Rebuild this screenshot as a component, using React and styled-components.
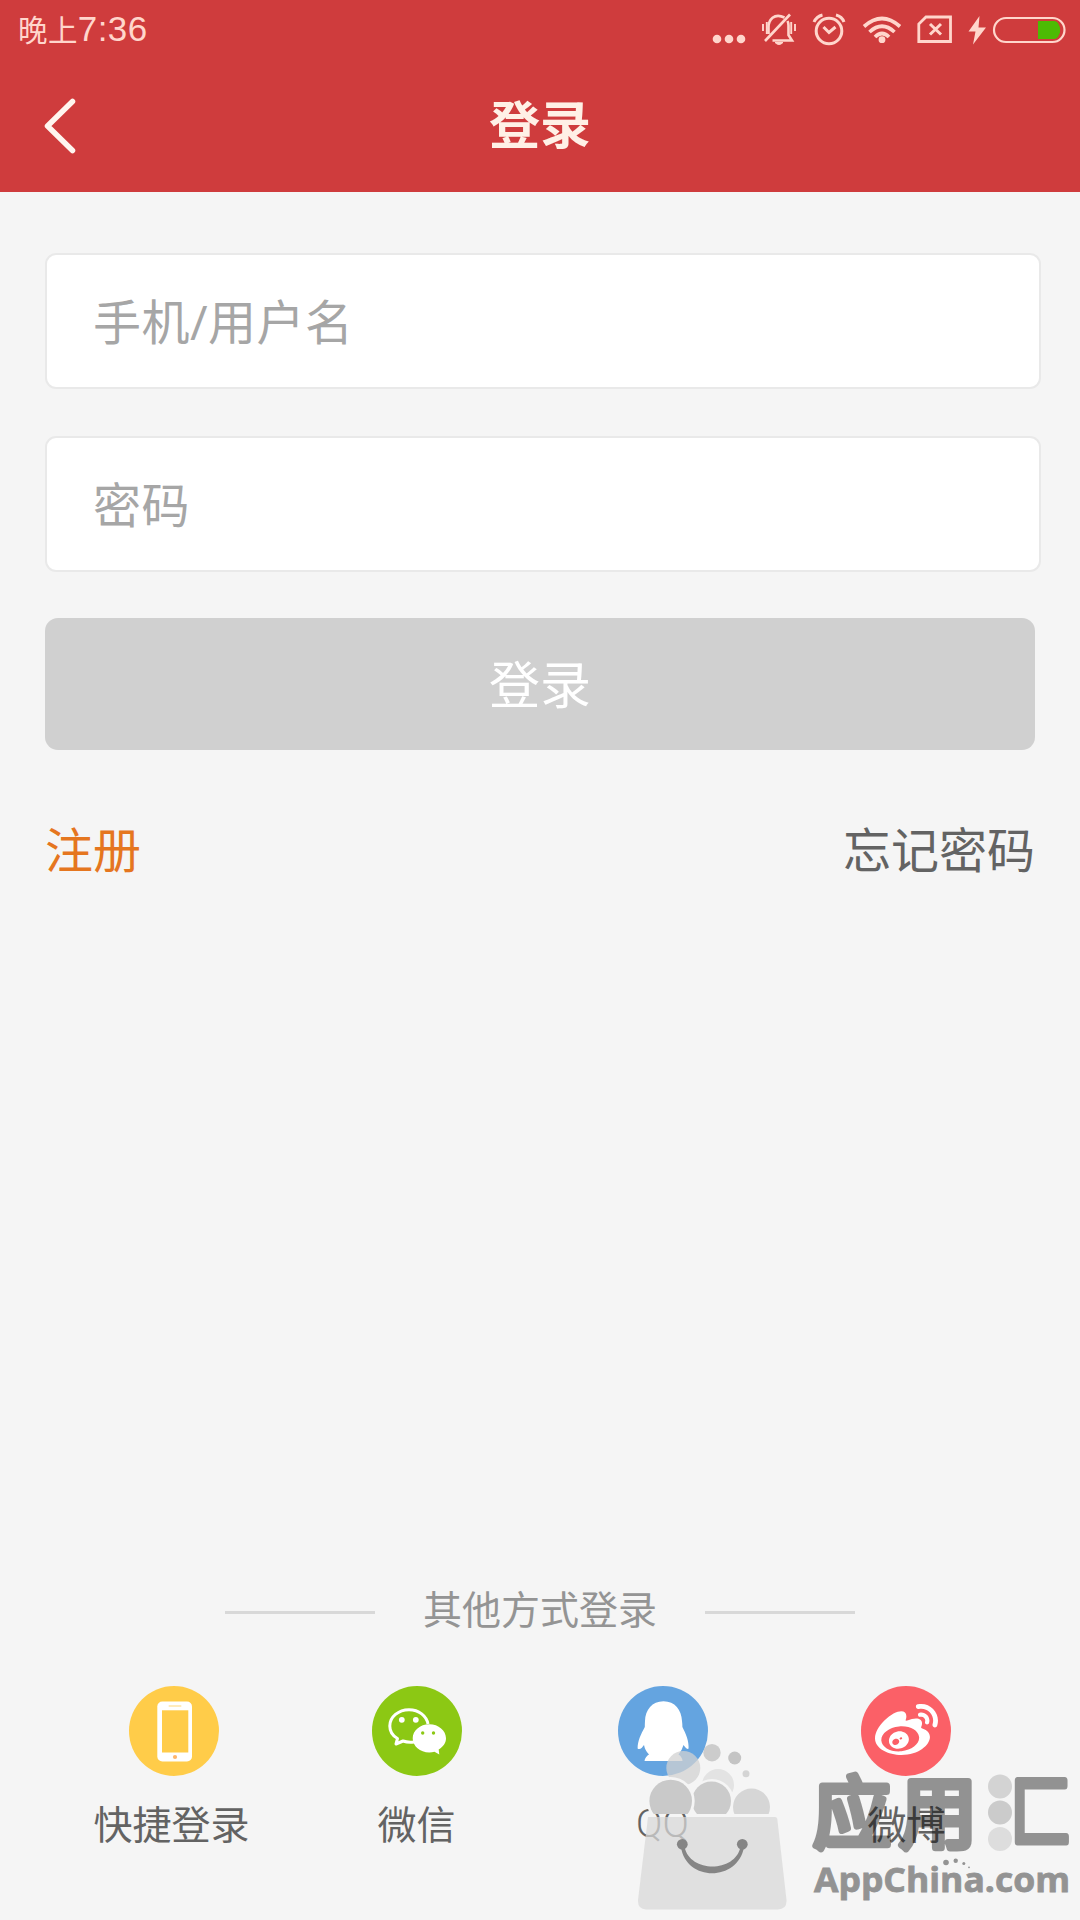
import React from "react";
import styled, { createGlobalStyle } from "styled-components";
import { FaWeibo } from "react-icons/fa";

const GlobalStyle = createGlobalStyle`
  * {
    box-sizing: border-box;
  }

  body {
    margin: 0;
    background-color: #f5f5f5;
    font-family: Roboto, "Noto Sans CJK SC", sans-serif;
  }
`;

const Page = styled.div`
  position: relative;
  display: flex;
  flex-direction: column;
  width: 1080px;
  height: 1920px;
  overflow: hidden;
  background-color: #f5f5f5;
`;

const Header = styled.header`
  height: 192px;
  background-color: #cf3c3d;
`;

const StatusBar = styled.div`
  display: flex;
  justify-content: space-between;
  height: 60px;
  padding-left: 18px;
  color: #ffd6cc;
`;

const Time = styled.div`
  display: flex;
  align-items: baseline;
  font-family: "Liberation Sans", sans-serif;
  font-size: 35px;
  letter-spacing: 0.4px;
  line-height: 57px;
`;

const DayPart = styled.span`
  font-family: "Noto Sans CJK SC", sans-serif;
  font-size: 29.5px;
`;

const StatusIcons = styled.div`
  display: flex;

  svg {
    display: block;
    height: 60px;
    fill: none;
    stroke: currentColor;
    stroke-width: 3;
  }
`;

const TitleBar = styled.div`
  display: grid;
  grid-template-columns: 120px 1fr 120px;
  align-items: center;
  height: 132px;
`;

const BackButton = styled.button`
  display: flex;
  width: 120px;
  height: 132px;
  padding: 0;
  border: none;
  background: none;
`;

const Title = styled.h1`
  margin: 0;
  padding-bottom: 8px;
  text-align: center;
  color: #fff0e6;
  font-family: "Noto Sans CJK SC", sans-serif;
  font-size: 51px;
  font-weight: 700;
  line-height: 76px;
`;

const Form = styled.form`
  display: flex;
  flex-direction: column;
  padding: 61px 39px 0 45px;
`;

const Field = styled.input`
  width: 996px;
  height: 136px;
  margin-bottom: 47px;
  padding: 0 0 0 46px;
  border: 2px solid #e9e9e9;
  border-radius: 11px;
  outline: none;
  background-color: #fff;
  font-family: "Open Sans", "Noto Sans CJK SC", sans-serif;
  font-size: 48px;
  letter-spacing: 0.5px;

  &::placeholder {
    color: #a6a6a6;
    opacity: 1;
  }
`;

const SubmitButton = styled.button`
  width: 990px;
  height: 132px;
  margin-top: -1px;
  padding: 0 0 5px;
  border: none;
  border-radius: 13px;
  background-color: #d0d0d0;
  color: #fff;
  font-family: "Noto Sans CJK SC", sans-serif;
  font-size: 51px;
`;

const Links = styled.div`
  display: flex;
  justify-content: space-between;
  width: 990px;
  margin-top: 61px;
`;

const TextLink = styled.a`
  color: ${({ $accent }) => ($accent ? "#e5761f" : "#636363")};
  font-family: "Noto Sans CJK SC", sans-serif;
  font-size: 48px;
  line-height: 72px;
`;

const OtherLogin = styled.section`
  margin-top: auto;
  padding: 0 51px 69px 49px;
`;

const Divider = styled.div`
  display: flex;
  align-items: center;
  justify-content: center;
  gap: 48px;
  margin-bottom: 50px;
  padding-left: 2px;
  color: #949494;
  font-family: "Noto Sans CJK SC", sans-serif;
  font-size: 39px;
  line-height: 58px;

  &::before,
  &::after {
    content: "";
    width: 150px;
    height: 3px;
    margin-top: 11px;
    background-color: #d8d8d8;
  }
`;

const Providers = styled.div`
  display: grid;
  grid-template-columns: repeat(4, 245px);
`;

const Provider = styled.div`
  display: flex;
  flex-direction: column;
  align-items: center;
`;

const ProviderIcon = styled.div`
  display: flex;
  align-items: center;
  justify-content: center;
  width: 90px;
  height: 90px;
  margin-left: ${({ $shift }) => $shift || 0}px;
  border-radius: 50%;
  background-color: ${({ $color }) => $color};
  color: #fff;
`;

const ProviderName = styled.span`
  margin-top: ${({ $latin }) => ($latin ? 22 : 17)}px;
  padding-left: ${({ $latin }) => ($latin ? 2 : 0)}px;
  color: #636363;
  font-family: ${({ $latin }) => ($latin ? "Roboto" : '"Noto Sans CJK SC"')}, sans-serif;
  font-size: 39px;
  font-weight: ${({ $latin }) => ($latin ? 300 : 400)};
  line-height: ${({ $latin }) => ($latin ? 53 : 58)}px;
`;

const Watermark = styled.svg`
  position: absolute;
  right: 0;
  bottom: 0;
  pointer-events: none;
`;

const MoreIcon = () => (
  <svg width="46" viewBox="712 0 46 60">
    <g fill="currentColor" stroke="none">
      <circle cx="717" cy="39" r="4.3" />
      <circle cx="729" cy="39" r="4.3" />
      <circle cx="741" cy="39" r="4.3" />
    </g>
  </svg>
);

const MutedBellIcon = () => (
  <svg width="48" viewBox="758 0 48 60">
    <path d="M784.5 17.5C774 12.5 768.5 20 768.5 27.5V34M772.5 40.5H792L788.5 35V25.5C788.5 23.5 788 22 787.5 21" strokeWidth="2.6" />
    <path d="M765 41L790 14.5" strokeWidth="2.6" />
    <path d="M763 24V31M766.8 22V34M791.2 22V34M795 24V31" strokeWidth="1.9" />
    <path d="M775 42.5H783Q779 46.5 775 42.5Z" fill="currentColor" strokeWidth="1" />
  </svg>
);

const AlarmIcon = () => (
  <svg width="50" viewBox="806 0 50 60">
    <circle cx="829" cy="31" r="12.8" />
    <path d="M823.5 27L829 32.5L835.5 27" />
    <path d="M814 22Q816.5 16.5 822.5 15M836 15Q842 16.5 844 22" />
  </svg>
);

const WifiIcon = () => (
  <svg width="54" viewBox="856 0 54 60">
    <path d="M864 26.5Q882 10.5 900 26.5M869.5 32Q882 20.5 894.5 32M875 37Q882 30 889 37" strokeWidth="3.7" />
    <circle cx="882" cy="39.7" r="3.4" fill="currentColor" stroke="none" />
  </svg>
);

const NoSimIcon = () => (
  <svg width="54" viewBox="910 0 54 60">
    <path d="M926 17H950.5V41.5H918.8V24Z" strokeWidth="2.8" />
    <path d="M930 24L941 34.5M941 24L930 34.5" />
  </svg>
);

const BatteryIcon = () => (
  <svg width="116" viewBox="964 0 116 60">
    <path d="M979.5 16L968.5 31.5H975.5L973 44.5L986 27.5H978.5Z" fill="currentColor" stroke="none" />
    <rect x="994" y="18" width="70.5" height="24" rx="12" strokeWidth="2.2" />
    <path d="M1038 21H1054Q1057 21 1058.5 24L1060 27.5V32.5L1058.5 36Q1057 39 1054 39H1038Z" fill="#4cbb04" stroke="none" />
  </svg>
);

const PhoneIcon = () => (
  <svg width="90" height="90" viewBox="0 0 90 90">
    <rect x="28.3" y="15.5" width="34.7" height="60" rx="5" fill="#fff" />
    <rect x="33" y="24.3" width="26.3" height="42.2" fill="#ffcc49" />
    <rect x="39.5" y="19.2" width="13" height="1.5" rx="0.7" fill="#ffe5a6" />
    <circle cx="46" cy="71" r="2.1" fill="#ffb56b" />
  </svg>
);

const WechatIcon = () => (
  <svg width="90" height="90" viewBox="0 0 90 90">
    <path
      d="M42 56Q36 56.8 31 55L24 58L25.5 52.5C20 49.5 17.8 44.5 17.8 40C17.8 31 26.5 23.7 37 23.7C47 23.7 54.5 30 56 38"
      fill="none"
      stroke="#fff"
      strokeWidth="3"
      strokeLinejoin="round"
    />
    <circle cx="29.8" cy="33.8" r="2.9" fill="#fff" />
    <circle cx="43.8" cy="33.8" r="2.9" fill="#fff" />
    <path d="M57.3 38.2C48 38.2 40.7 44.5 40.7 52.3C40.7 60.3 48 66.5 57.3 66.5Q60 66.5 62.5 65.7L67.3 68.5L66.7 63.5C71 61 74 57 74 52.3C74 44.5 66.6 38.2 57.3 38.2Z" fill="#fff" />
    <circle cx="50.7" cy="47" r="1.7" fill="#8cc814" />
    <circle cx="61.5" cy="47" r="1.7" fill="#8cc814" />
  </svg>
);

const QQIcon = () => (
  <svg width="90" height="90" viewBox="0 0 90 90">
    <path
      d="M45.5 15.3C34 15.3 27.3 24 27 35Q26.8 38 26.8 41C23 48 19.5 55 19.6 62.5C22 64.5 24.5 61 26 59Q27 64.5 31 68.5Q27 71 26.5 75H64.5Q64.3 71 60.5 68.5Q64 64.5 65.5 59C67 61 69 64 70.6 62.5C71 55 68 48 64.4 41Q64.4 38 64 35C63.5 24 57 15.3 45.5 15.3Z"
      fill="#fff"
    />
  </svg>
);

const App = () => (
  <>
    <GlobalStyle />
    <Page>
      <Header>
        <StatusBar>
          <Time>
            <DayPart>晚上</DayPart>7:36
          </Time>
          <StatusIcons>
            <MoreIcon />
            <MutedBellIcon />
            <AlarmIcon />
            <WifiIcon />
            <NoSimIcon />
            <BatteryIcon />
          </StatusIcons>
        </StatusBar>
        <TitleBar>
          <BackButton type="button" aria-label="返回">
            <svg width="120" height="132" viewBox="0 0 120 132">
              <path d="M72.5 41.5L47.5 66L72.5 90.5" fill="none" stroke="#fff5ef" strokeWidth="5.5" strokeLinecap="round" strokeLinejoin="round" />
            </svg>
          </BackButton>
          <Title>登录</Title>
        </TitleBar>
      </Header>

      <Form>
        <Field type="text" placeholder="手机/用户名" />
        <Field type="password" placeholder="密码" />
        <SubmitButton type="button">登录</SubmitButton>
        <Links>
          <TextLink $accent>注册</TextLink>
          <TextLink>忘记密码</TextLink>
        </Links>
      </Form>

      <OtherLogin>
        <Divider>其他方式登录</Divider>
        <Providers>
          <Provider>
            <ProviderIcon $color="#ffcc49" $shift={5}>
              <PhoneIcon />
            </ProviderIcon>
            <ProviderName>快捷登录</ProviderName>
          </Provider>
          <Provider>
            <ProviderIcon $color="#8cc814">
              <WechatIcon />
            </ProviderIcon>
            <ProviderName>微信</ProviderName>
          </Provider>
          <Provider>
            <ProviderIcon $color="#64a4e0" $shift={2}>
              <QQIcon />
            </ProviderIcon>
            <ProviderName $latin>QQ</ProviderName>
          </Provider>
          <Provider>
            <ProviderIcon $color="#fb6067" $shift={-1}>
              <FaWeibo size={63} />
            </ProviderIcon>
            <ProviderName>微博</ProviderName>
          </Provider>
        </Providers>
      </OtherLogin>

      <Watermark width="450" height="180" viewBox="630 1740 450 180">
        {/* balls in the bag, cut off by its upper edge */}
        <clipPath id="aboveBag">
          <rect x="630" y="1740" width="170" height="74" />
        </clipPath>
        <g clipPath="url(#aboveBag)">
          <circle cx="683.3" cy="1768" r="17" fill="#d2d2d2" fillOpacity="0.75" />
          <circle cx="718" cy="1785" r="16" fill="#e3e3e3" />
          <circle cx="712" cy="1801" r="22" fill="#f5f5f5" />
          <circle cx="751.5" cy="1807" r="18.5" fill="#d6d6d6" />
          <circle cx="711.5" cy="1801" r="19.5" fill="#cbcbcb" />
          <circle cx="670.7" cy="1801" r="24" fill="#f5f5f5" />
          <circle cx="670.7" cy="1801" r="21.3" fill="#c9c9c9" />
          <circle cx="712" cy="1752.7" r="8.7" fill="#c8c8c8" fillOpacity="0.9" />
          <circle cx="734.7" cy="1758" r="6.5" fill="#c4c4c4" />
          <circle cx="746" cy="1773.7" r="3.5" fill="#d4d4d4" />
        </g>
        <path d="M648 1817H775Q777 1817 777.3 1819L786.5 1900Q787 1909 778 1909.5H646Q637.5 1909 638 1900Z" fill="#d9d9d9" fillOpacity="0.73" />
        <g fill="#858585">
          <circle cx="682.3" cy="1844.3" r="5.4" />
          <circle cx="742.3" cy="1844.3" r="5.4" />
          <path d="M681 1847C686 1882 738 1882 744 1847L740.5 1847C735 1873 690 1873 684.5 1847Z" />
        </g>

        <g opacity="0.4" stroke="#000" strokeLinejoin="round" strokeLinecap="round" fontFamily="Noto Sans CJK SC, sans-serif" fontSize="78">
          <text x="813" y="1841.5" strokeWidth="7">应</text>
          <text x="899" y="1841.5" strokeWidth="7">用</text>
          <text x="1010" y="1841" textLength="62" lengthAdjust="spacingAndGlyphs" strokeWidth="7">匚</text>
        </g>
        <circle cx="1000" cy="1786.5" r="12" fill="#d3d3d3" />
        <circle cx="1000" cy="1812.5" r="12" fill="#cbcbcb" />
        <circle cx="1000" cy="1839" r="12" fill="#dddddd" />
        <text x="814" y="1892" textLength="256" lengthAdjust="spacingAndGlyphs" fill="#939393" stroke="#939393" strokeWidth="0.8" fontFamily="Open Sans, sans-serif" fontWeight="700" fontSize="34">
          AppChina.com
        </text>
        <g fill="#939393">
          <circle cx="946" cy="1862.5" r="2.8" />
          <circle cx="955.7" cy="1860.7" r="2.2" />
          <circle cx="963.8" cy="1863.4" r="1.5" />
          <circle cx="969" cy="1867.3" r="0.9" />
        </g>
      </Watermark>
    </Page>
  </>
);

export default App;
